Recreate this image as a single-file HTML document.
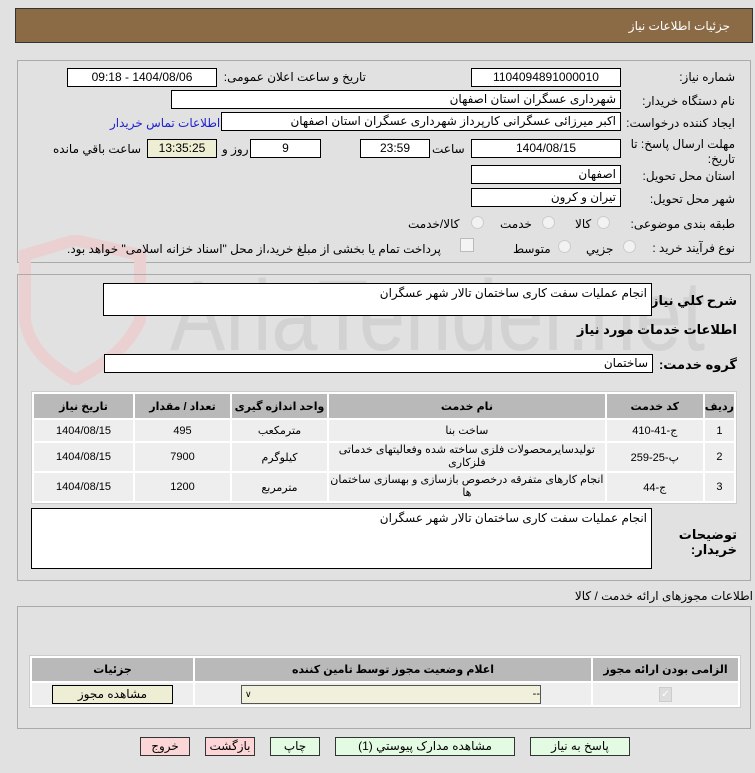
<!DOCTYPE html>
<html><head><meta charset="utf-8"><style>
body{margin:0;width:755px;height:773px;background:#e1e1e1;position:relative;overflow:hidden;font-family:"Liberation Sans","DejaVu Sans",sans-serif;font-size:12px;color:#000}
.a{position:absolute}
.box{position:absolute;background:#fff;border:1px solid #000;box-sizing:border-box;direction:rtl;padding:0 4px;line-height:17px;font-size:12px;white-space:nowrap;overflow:hidden}
.c{text-align:center}
.lbl{position:absolute;direction:rtl;white-space:nowrap;font-size:12px}
.panel{position:absolute;border:1px solid #aaa;box-sizing:border-box}
.b{font-weight:bold}
table{border-collapse:separate;border-spacing:2px;position:absolute;background:#fff;border:1px solid #ccc}
td,th{font-size:11px;text-align:center;direction:rtl;padding:0}
th{background:#b9b9b9;font-weight:bold}
td{background:#eee}
.rad{position:absolute;width:11px;height:11px;border-radius:50%;border:1px solid #ccc;background:#f2f2f2}
.btn{position:absolute;border:1px solid #333;box-sizing:border-box;text-align:center;line-height:16px;font-size:12px;direction:rtl}
</style></head><body>
<div class="a" style="left:15px;top:8px;width:738px;height:35px;background:#8b6b46;border:1px solid #333;box-sizing:border-box"></div>
<div class="lbl" style="right:25px;top:19px;color:#fff;font-size:12px">جزئیات اطلاعات نیاز</div>

<div class="panel" style="left:17px;top:60px;width:734px;height:203px"></div>
<svg class="a" style="left:15px;top:235px" width="700" height="150">
<path d="M10 20 L60 5 L125 20 L125 85 Q110 120 60 145 Q15 120 10 85 Z" fill="none" stroke="#ead0d0" stroke-width="12"/>
<text x="155" y="115" font-family="Liberation Sans Narrow,Liberation Sans,sans-serif" font-size="100" fill="#d2d2d2" textLength="535" lengthAdjust="spacingAndGlyphs">AriaTender.net</text>
</svg>

<div class="lbl" style="right:20px;top:70px">شماره نیاز:</div>
<div class="box c" style="left:471px;top:68px;width:150px;height:19px">1104094891000010</div>
<div class="lbl" style="right:389px;top:70px">تاریخ و ساعت اعلان عمومی:</div>
<div class="box c" style="left:67px;top:68px;width:150px;height:19px">1404/08/06 - 09:18</div>

<div class="lbl" style="right:20px;top:94px">نام دستگاه خریدار:</div>
<div class="box" style="left:171px;top:90px;width:450px;height:19px">شهرداری عسگران استان اصفهان</div>

<div class="lbl" style="right:20px;top:116px">ایجاد کننده درخواست:</div>
<div class="box" style="left:221px;top:112px;width:400px;height:19px">اکبر میرزائی عسگرانی کارپرداز شهرداری عسگران استان اصفهان</div>
<div class="lbl" style="left:110px;top:116px;color:#2020d0">اطلاعات تماس خریدار</div>

<div class="lbl" style="right:20px;top:137px;line-height:15px">مهلت ارسال پاسخ: تا<br>تاریخ:</div>
<div class="box c" style="left:471px;top:139px;width:150px;height:19px">1404/08/15</div>
<div class="lbl" style="left:432px;top:142px">ساعت</div>
<div class="box c" style="left:360px;top:139px;width:70px;height:19px">23:59</div>
<div class="box c" style="left:250px;top:139px;width:71px;height:19px">9</div>
<div class="lbl" style="left:222px;top:142px">روز و</div>
<div class="box c" style="left:147px;top:139px;width:70px;height:19px;background:#eeeed4">13:35:25</div>
<div class="lbl" style="left:53px;top:142px">ساعت باقي مانده</div>

<div class="lbl" style="right:20px;top:169px">استان محل تحویل:</div>
<div class="box" style="left:471px;top:165px;width:150px;height:19px">اصفهان</div>
<div class="lbl" style="right:20px;top:192px">شهر محل تحویل:</div>
<div class="box" style="left:471px;top:188px;width:150px;height:19px">تیران و کرون</div>

<div class="lbl" style="right:20px;top:217px">طبقه بندی موضوعی:</div>
<div class="rad" style="left:597px;top:216px"></div><div class="lbl" style="left:575px;top:217px">کالا</div>
<div class="rad" style="left:542px;top:216px"></div><div class="lbl" style="left:500px;top:217px">خدمت</div>
<div class="rad" style="left:471px;top:216px"></div><div class="lbl" style="left:408px;top:217px">کالا/خدمت</div>

<div class="lbl" style="right:20px;top:241px">نوع فرآیند خرید :</div>
<div class="rad" style="left:623px;top:240px"></div><div class="lbl" style="left:586px;top:242px">جزیي</div>
<div class="rad" style="left:558px;top:240px"></div><div class="lbl" style="left:513px;top:242px">متوسط</div>
<div class="a" style="left:460px;top:238px;width:12px;height:12px;border:1px solid #bbb;background:#f4f4f4"></div>
<div class="lbl" style="left:67px;top:242px">پرداخت تمام یا بخشی از مبلغ خرید،از محل "اسناد خزانه اسلامی" خواهد بود.</div>

<div class="panel" style="left:17px;top:274px;width:734px;height:307px"></div>
<div class="lbl b" style="right:18px;top:293px;font-size:13px">شرح کلي نیاز:</div>
<div class="box" style="left:103px;top:283px;width:549px;height:33px;line-height:18px;background:#fff">انجام عملیات سفت کاری ساختمان تالار شهر عسگران</div>
<div class="lbl b" style="right:18px;top:322px;font-size:13px">اطلاعات خدمات مورد نیاز</div>
<div class="lbl b" style="right:18px;top:357px;font-size:13px">گروه خدمت:</div>
<div class="box" style="left:104px;top:354px;width:549px;height:19px">ساختمان</div>

<table style="left:31px;top:391px;width:706px">
<tr style="height:24px"><th style="width:99px">تاریخ نیاز</th><th style="width:95px">تعداد / مقدار</th><th style="width:95px">واحد اندازه گیری</th><th>نام خدمت</th><th style="width:96px">کد خدمت</th><th style="width:26px">ردیف</th></tr>
<tr style="height:21px"><td>1404/08/15</td><td>495</td><td>مترمکعب</td><td>ساخت بنا</td><td>ج-41-410</td><td>1</td></tr>
<tr style="height:28px"><td>1404/08/15</td><td>7900</td><td>کیلوگرم</td><td style="line-height:13px">تولیدسایرمحصولات فلزی ساخته شده وفعالیتهای خدماتی فلزکاری</td><td>پ-25-259</td><td>2</td></tr>
<tr style="height:28px"><td>1404/08/15</td><td>1200</td><td>مترمربع</td><td style="line-height:13px">انجام کارهای متفرقه درخصوص بازسازی و بهسازی ساختمان ها</td><td>ج-44</td><td>3</td></tr>
</table>

<div class="box" style="left:31px;top:508px;width:621px;height:61px;line-height:18px">انجام عملیات سفت کاری ساختمان تالار شهر عسگران</div>
<div class="lbl b" style="right:18px;top:527px;font-size:13px;line-height:15px">توضیحات<br>خریدار:</div>

<div class="lbl" style="right:2px;top:589px">اطلاعات مجوزهای ارائه خدمت / کالا</div>
<div class="panel" style="left:17px;top:606px;width:734px;height:123px"></div>
<table style="left:29px;top:655px;width:712px">
<tr style="height:23px"><th style="width:161px">جزئیات</th><th>اعلام وضعیت مجوز توسط تامین کننده</th><th style="width:145px">الزامی بودن ارائه مجوز</th></tr>
<tr style="height:22px"><td><div style="margin:0 auto;width:119px;height:17px;border:1px solid #000;background:#eeeed4;line-height:17px;font-size:12px">مشاهده مجوز</div></td>
<td><div style="margin:0 50px 0 0;width:298px;height:17px;border:1px solid #555;background:#f0f0dc;position:relative;text-align:right;line-height:17px"><span style="position:absolute;left:3px;font-size:9px">&#8744;</span>--&nbsp;</div></td>
<td><div style="margin:0 auto;width:11px;height:13px;border:1px solid #ccc;background:#ddd;color:#fff;font-size:10px;line-height:13px">✓</div></td></tr>
</table>

<div class="btn" style="left:140px;top:737px;width:50px;height:19px;background:#fcd6d6">خروج</div>
<div class="btn" style="left:205px;top:737px;width:50px;height:19px;background:#fcd6d6">بازگشت</div>
<div class="btn" style="left:270px;top:737px;width:50px;height:19px;background:#e2fbe2">چاپ</div>
<div class="btn" style="left:335px;top:737px;width:180px;height:19px;background:#e2fbe2">مشاهده مدارک پیوستي (1)</div>
<div class="btn" style="left:530px;top:737px;width:100px;height:19px;background:#e2fbe2">پاسخ به نیاز</div>
</body></html>
